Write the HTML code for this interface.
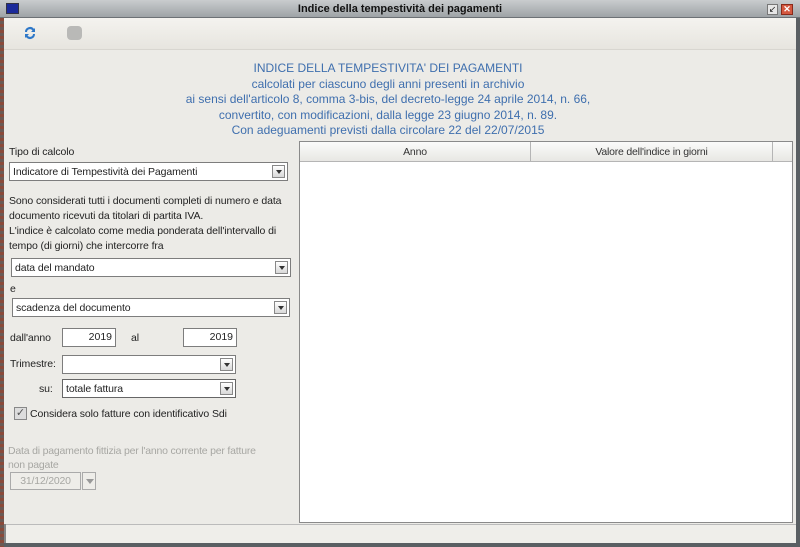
<!DOCTYPE html>
<html><head><meta charset="utf-8"><style>
*{margin:0;padding:0;box-sizing:border-box}
body{width:800px;height:547px;overflow:hidden;background:#5a5f63;font-family:"Liberation Sans",sans-serif;font-size:11px;color:#222;position:relative}
.abs{position:absolute}
.title{left:0;top:0;width:800px;height:18px;background:linear-gradient(#c9ccce,#9ea3a6);border-bottom:1px solid #6c7175;text-align:center;font-weight:bold;font-size:11px;line-height:18px;color:#111}
.win{left:4px;top:18px;width:792px;height:525px;background:#ecebe7}
.tb{left:4px;top:18px;width:792px;height:32px;background:linear-gradient(#f4f3ef,#e7e5df);border-bottom:1px solid #d8d6d0}
.head{left:0;width:776px;text-align:center;color:#3f6fae;font-size:12px;line-height:15.5px}
.lbl{font-size:10.5px;color:#222;letter-spacing:-0.1px}
.combo{background:#fff;border:1px solid #7d7d7d;height:19px;font-size:10.5px;line-height:18px;padding-left:3px;letter-spacing:-0.1px}
.arr{position:absolute;right:2px;top:2px;width:13px;height:13px;border:1px solid #888;background:linear-gradient(#fff,#d8d8d8)}
.arr:after{content:"";position:absolute;left:3px;top:4px;border-left:3px solid transparent;border-right:3px solid transparent;border-top:4px solid #333}
.inp{background:#fff;border:1px solid #7d7d7d;height:19px;text-align:right;padding-right:3px;line-height:17px;font-size:10.5px}
.table{left:299px;top:141px;width:494px;height:382px;background:#fff;border:1px solid #8a8a8a}
.th{position:absolute;top:0;height:20px;background:linear-gradient(#fbfbfa,#e8e7e3);border-bottom:1px solid #b5b5b5;border-right:1px solid #b5b5b5;text-align:center;line-height:20px;color:#333;font-size:10.5px;letter-spacing:-0.2px}
.gray{color:#a7a7a3;font-size:10.5px;letter-spacing:-0.2px}
</style></head><body>
<div class="abs" style="left:0;top:0;width:4px;height:547px;background:repeating-linear-gradient(#8a4a3a 0 3px,#6a5a55 3px 6px)"></div>
<div class="abs win"></div>
<div class="abs title">Indice della tempestività dei pagamenti</div>
<div class="abs" style="left:6px;top:3px;width:13px;height:11px;background:#1b2a9a;border:1px solid #334"></div>
<div class="abs" style="left:767px;top:4px;width:11px;height:11px;background:#e6e6e6;border:1px solid #777;font-size:9px;line-height:9px;text-align:center">↙</div>
<div class="abs" style="left:781px;top:4px;width:12px;height:11px;background:#d4573f;border:1px solid #8a2a1a;color:#fff;font-size:9px;line-height:9px;text-align:center;font-weight:bold">✕</div>
<div class="abs tb"></div>
<svg class="abs" style="left:22px;top:25px" width="16" height="16" viewBox="0 0 16 16"><path d="M3 7a5 5 0 0 1 9-3l1-1v4h-4l1.5-1.5A3 3 0 0 0 5 7z" fill="#2f78c8"/><path d="M13 9a5 5 0 0 1-9 3l-1 1V9h4l-1.5 1.5A3 3 0 0 0 11 9z" fill="#2f78c8"/></svg>
<div class="abs" style="left:67px;top:26px;width:15px;height:14px;border-radius:4px;background:#b9b9b7"></div>
<div class="abs head" style="top:61px">INDICE DELLA TEMPESTIVITA' DEI PAGAMENTI<br>calcolati per ciascuno degli anni presenti in archivio<br>ai sensi dell'articolo 8, comma 3-bis, del decreto-legge 24 aprile 2014, n. 66,<br>convertito, con modificazioni, dalla legge 23 giugno 2014, n. 89.<br>Con adeguamenti previsti dalla circolare 22 del 22/07/2015</div>
<div class="abs lbl" style="left:9px;top:146px">Tipo di calcolo</div>
<div class="abs combo" style="left:9px;top:162px;width:279px">Indicatore di Tempestività dei Pagamenti<div class="arr"></div></div>
<div class="abs lbl" style="left:9px;top:194px;line-height:15px;width:290px">Sono considerati tutti i documenti completi di numero e data<br>documento ricevuti da titolari di partita IVA.<br>L'indice è calcolato come media ponderata dell'intervallo di<br>tempo (di giorni) che intercorre fra</div>
<div class="abs combo" style="left:11px;top:258px;width:280px">data del mandato<div class="arr"></div></div>
<div class="abs lbl" style="left:10px;top:283px">e</div>
<div class="abs combo" style="left:12px;top:298px;width:278px">scadenza del documento<div class="arr"></div></div>
<div class="abs lbl" style="left:10px;top:332px">dall'anno</div>
<div class="abs inp" style="left:62px;top:328px;width:54px">2019</div>
<div class="abs lbl" style="left:131px;top:332px">al</div>
<div class="abs inp" style="left:183px;top:328px;width:54px">2019</div>
<div class="abs lbl" style="left:10px;top:358px">Trimestre:</div>
<div class="abs combo" style="left:62px;top:355px;width:174px"><div class="arr"></div></div>
<div class="abs lbl" style="left:39px;top:383px">su:</div>
<div class="abs combo" style="left:62px;top:379px;width:174px;border-color:#666">totale fattura<div class="arr"></div></div>
<div class="abs" style="left:14px;top:407px;width:13px;height:13px;border:1px solid #888;background:#ddd;font-size:11px;line-height:11px;text-align:center;color:#555">✓</div>
<div class="abs lbl" style="left:30px;top:408px">Considera solo fatture con identificativo Sdi</div>
<div class="abs gray" style="left:8px;top:444px;line-height:14px;width:280px">Data di pagamento fittizia per l'anno corrente per fatture<br>non pagate</div>
<div class="abs gray" style="left:10px;top:472px;width:71px;height:18px;border:1px solid #aaa;text-align:center;line-height:16px;background:#eeede9">31/12/2020</div>
<div class="abs" style="left:82px;top:472px;width:14px;height:18px;border:1px solid #aaa;background:#eeede9"><div style="position:absolute;left:3px;top:6px;border-left:4px solid transparent;border-right:4px solid transparent;border-top:5px solid #999"></div></div>
<div class="abs table">
<div class="th" style="left:0;width:231px">Anno</div>
<div class="th" style="left:231px;width:242px">Valore dell'indice in giorni</div>
<div class="th" style="left:473px;width:19px;border-right:none"></div>
</div>
<div class="abs" style="left:4px;top:524px;width:792px;height:19px;background:#efeeea;border-top:1px solid #bbb"></div>
<div class="abs" style="left:4px;top:524px;width:2px;height:19px;background:#888"></div>
</body></html>
